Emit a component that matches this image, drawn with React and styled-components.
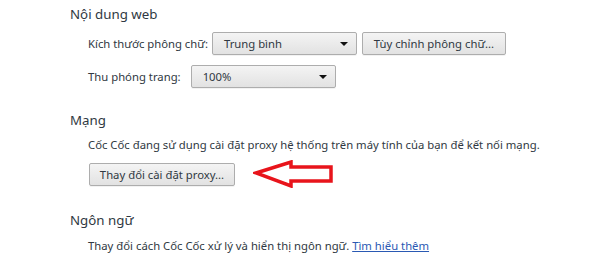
import React from "react";
import styled, { createGlobalStyle } from "styled-components";

const GlobalStyle = createGlobalStyle`
  body {
    margin: 0;
    background: #fff;
    font-family: "Noto Sans", "Open Sans", sans-serif;
    font-size: 11.3px;
    color: #303942;
  }
`;

export default function App() {
  return (
    <>
      <GlobalStyle />
      <Page>
        <Section>
          <Heading>Nội dung web</Heading>
          <Body $top={9}>
            <Row $gap={4}>
              <Label>Kích thước phông chữ:</Label>
              <Select>
                <span>Trung bình</span>
                <Caret />
              </Select>
              <Button $width={144}>Tùy chỉnh phông chữ...</Button>
            </Row>
            <Row $gap={10}>
              <Label>Thu phóng trang:</Label>
              <Select>
                <span>100%</span>
                <Caret />
              </Select>
            </Row>
          </Body>
        </Section>

        <Section>
          <Heading>Mạng</Heading>
          <Body $top={8}>
            <Text>
              Cốc Cốc đang sử dụng cài đặt proxy hệ thống trên máy tính của bạn
              để kết nối mạng.
            </Text>
            <ProxyRow>
              <Button $width={146}>Thay đổi cài đặt proxy...</Button>
              <Arrow />
            </ProxyRow>
          </Body>
        </Section>

        <Section>
          <Heading>Ngôn ngữ</Heading>
          <Body $top={9}>
            <Text>
              Thay đổi cách Cốc Cốc xử lý và hiển thị ngôn ngữ.{" "}
              <Link href="#">Tìm hiểu thêm</Link>
            </Text>
          </Body>
        </Section>
      </Page>
    </>
  );
}

function Arrow() {
  return (
    <ArrowSvg width="82" height="28" viewBox="0 0 82 28">
      <polygon
        points="3,13 38,2 38,7 78,7 78,21 38,21 38,26"
        fill="#fff"
        stroke="#e8141b"
        strokeWidth="3.5"
        strokeLinejoin="miter"
      />
    </ArrowSvg>
  );
}

const Page = styled.div`
  padding: 5px 0 0 70px;
  display: flex;
  flex-direction: column;
  gap: 23px;
`;

const Section = styled.section`
  display: flex;
  flex-direction: column;
`;

const Heading = styled.h3`
  margin: 0;
  font-size: 13.3px;
  font-weight: normal;
  line-height: 18px;
  color: #303942;
`;

const Body = styled.div`
  margin-top: ${(p) => p.$top}px;
  padding-left: 18px;
  display: flex;
  flex-direction: column;
  gap: 10px;
`;

const Row = styled.div`
  display: flex;
  align-items: center;
  gap: ${(p) => p.$gap}px;
  height: 23px;
`;

const ProxyRow = styled.div`
  display: flex;
  align-items: center;
  gap: 18px;
  margin-top: -3px;
`;

const Label = styled.span`
  line-height: 16px;
`;

const controlBase = `
  box-sizing: border-box;
  height: 23px;
  border: 1px solid #adadad;
  border-radius: 2px;
  background: linear-gradient(#f4f4f4, #e2e2e2);
  box-shadow: 0 1px 0 rgba(0, 0, 0, 0.05);
  font-family: inherit;
  font-size: 11.3px;
  color: #303942;
`;

const Select = styled.div`
  ${controlBase}
  width: 145px;
  display: flex;
  align-items: center;
  justify-content: space-between;
  padding: 0 8px 0 11px;
`;

const Caret = styled.i`
  width: 0;
  height: 0;
  border-left: 4px solid transparent;
  border-right: 4px solid transparent;
  border-top: 4px solid #111;
`;

const Button = styled.button`
  ${controlBase}
  width: ${(p) => p.$width}px;
  padding: 0;
  margin-left: 1px;
  text-align: center;
`;

const Text = styled.p`
  margin: 0;
  line-height: 16px;
`;

const Link = styled.a`
  color: #2a59b3;
  text-decoration: underline;
`;

const ArrowSvg = styled.svg`
  display: block;
  flex: none;
`;
